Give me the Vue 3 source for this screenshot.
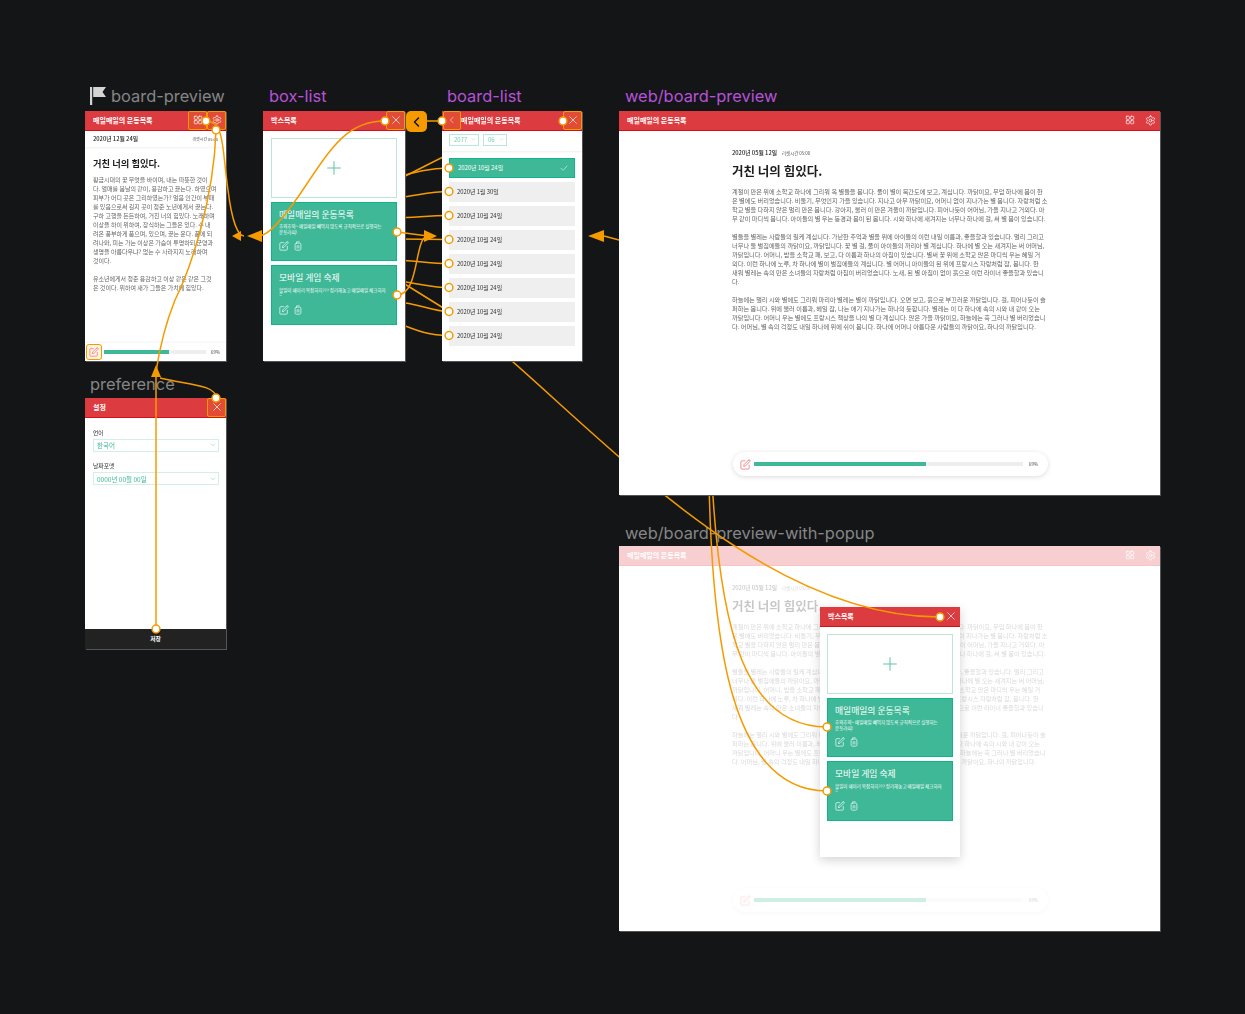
<template>
  <div class="canvas">
    <!-- icon sprite -->
    <svg class="sprite" width="0" height="0">
      <symbol id="i-edit" viewBox="0 0 24 24"><path d="M11 4H4a2 2 0 0 0-2 2v14a2 2 0 0 0 2 2h14a2 2 0 0 0 2-2v-7" /><path d="M18.5 2.5a2.12 2.12 0 0 1 3 3L12 15l-4 1 1-4 9.5-9.5z" /></symbol>
      <symbol id="i-trash" viewBox="0 0 24 24"><rect x="5" y="5" width="14" height="17" rx="3.5" /><path d="M9 2h6M10 11v6M14 11v6" /></symbol>
      <symbol id="i-grid" viewBox="0 0 24 24"><rect x="3" y="3" width="7.5" height="7.5" rx="1.5" /><rect x="13.5" y="3" width="7.5" height="7.5" rx="1.5" /><rect x="3" y="13.5" width="7.5" height="7.5" rx="1.5" /><rect x="13.5" y="13.5" width="7.5" height="7.5" rx="1.5" /></symbol>
      <symbol id="i-gear" viewBox="0 0 24 24"><path d="M12.22 2h-.44a2 2 0 0 0-2 2v.18a2 2 0 0 1-1 1.73l-.43.25a2 2 0 0 1-2 0l-.15-.08a2 2 0 0 0-2.73.73l-.22.38a2 2 0 0 0 .73 2.73l.15.1a2 2 0 0 1 1 1.72v.51a2 2 0 0 1-1 1.74l-.15.09a2 2 0 0 0-.73 2.73l.22.38a2 2 0 0 0 2.73.73l.15-.08a2 2 0 0 1 2 0l.43.25a2 2 0 0 1 1 1.73V20a2 2 0 0 0 2 2h.44a2 2 0 0 0 2-2v-.18a2 2 0 0 1 1-1.73l.43-.25a2 2 0 0 1 2 0l.15.08a2 2 0 0 0 2.73-.73l.22-.39a2 2 0 0 0-.73-2.73l-.15-.08a2 2 0 0 1-1-1.74v-.5a2 2 0 0 1 1-1.74l.15-.09a2 2 0 0 0 .73-2.73l-.22-.38a2 2 0 0 0-2.73-.73l-.15.08a2 2 0 0 1-2 0l-.43-.25a2 2 0 0 1-1-1.73V4a2 2 0 0 0-2-2z" /><circle cx="12" cy="12" r="3" /></symbol>
      <symbol id="i-x" viewBox="0 0 24 24"><path d="M4 4l16 16M20 4L4 20" /></symbol>
      <symbol id="i-back" viewBox="0 0 24 24"><path d="M15 4l-8 8 8 8" /></symbol>
      <symbol id="i-down" viewBox="0 0 24 24"><path d="M5 8l7 7 7-7" /></symbol>
      <symbol id="i-check" viewBox="0 0 24 24"><path d="M3 13l6 6L21 6" /></symbol>
      <symbol id="i-plus" viewBox="0 0 24 24"><path d="M12 1v22M1 12h22" /></symbol>
    </svg>

    <!-- frame names -->
    <div class="label grey l-preview">
      <svg class="flag" viewBox="0 0 16 18"><path d="M0 0h2.2v18H0z" /><path d="M3.2 0H16l-3.5 5L16 10H3.2z" /></svg>
      board-preview
    </div>
    <div class="label purple l-box">box-list</div>
    <div class="label purple l-list">board-list</div>
    <div class="label purple l-web">web/board-preview</div>
    <div class="label grey l-pref">preference</div>
    <div class="label grey l-popup">web/board-preview-with-popup</div>

    <!-- web frames -->
    <div v-for="w in webFrames" :key="w.cls" class="frame web" :class="w.cls">
      <div class="web-inner">
        <header class="head">
          <span class="head-title">매일매일의 운동목록</span>
          <span class="grow"></span>
          <span class="head-btn"><svg class="ic i10"><use href="#i-grid" /></svg></span>
          <span class="head-btn"><svg class="ic i11"><use href="#i-gear" /></svg></span>
        </header>
        <article class="web-article">
          <div class="web-date"><b>2020년 05월 12일</b><small>리셋시간 05:00</small></div>
          <h2 class="web-title">거친 너의 힘있다.</h2>
          <p class="web-body">{{ webBody }}</p>
        </article>
        <div class="web-bar">
          <svg class="ic i11 red"><use href="#i-edit" /></svg>
          <div class="track"><div class="fill"></div></div>
          <span class="pct">69%</span>
        </div>
      </div>
    </div>

    <!-- wires that run behind the frames -->
    <svg class="wires under" viewBox="0 0 1245 1014">
      <path v-for="(d, i) in underWires" :key="i" :d="d" />
    </svg>

    <!-- board-preview -->
    <div class="frame f-preview">
      <header class="head">
        <span class="head-title">매일매일의 운동목록</span>
        <span class="grow"></span>
        <span class="head-btn hot"><svg class="ic i10"><use href="#i-grid" /></svg></span>
        <span class="head-btn hot"><svg class="ic i10"><use href="#i-gear" /></svg></span>
      </header>
      <div class="m-date"><b>2020년 12월 24일</b><small>리셋시간 05:00</small></div>
      <h2 class="m-title">거친 너의 힘있다.</h2>
      <p class="m-body">{{ mobileBody }}</p>
      <div class="m-bar">
        <span class="edit-btn"><svg class="ic i10 red"><use href="#i-edit" /></svg></span>
        <div class="track"><div class="fill"></div></div>
        <span class="pct">69%</span>
      </div>
    </div>

    <!-- box-list, on the canvas and in the popup -->
    <div v-for="b in boxFrames" :key="b.cls" class="frame box" :class="b.cls">
      <header class="head">
        <span class="head-title">박스목록</span>
        <span class="grow"></span>
        <span class="head-btn" :class="{ hot: b.hot }"><svg class="ic i10"><use href="#i-x" /></svg></span>
      </header>
      <div class="box-body">
        <div class="add"><svg class="ic i14 teal"><use href="#i-plus" /></svg></div>
        <div v-for="c in cards" :key="c.title" class="card">
          <h3>{{ c.title }}</h3>
          <p>{{ c.desc }}</p>
          <div class="card-icons">
            <svg class="ic i10"><use href="#i-edit" /></svg>
            <svg class="ic i10"><use href="#i-trash" /></svg>
          </div>
        </div>
      </div>
    </div>

    <!-- board-list -->
    <div class="frame f-list">
      <header class="head head-list">
        <span class="head-btn hot"><svg class="ic i8"><use href="#i-back" /></svg></span>
        <span class="head-title">매일매일의 운동목록</span>
        <span class="grow"></span>
        <span class="head-btn hot"><svg class="ic i10"><use href="#i-x" /></svg></span>
      </header>
      <div class="selects">
        <span class="sel-y">2077<svg class="ic i5"><use href="#i-down" /></svg></span>
        <span class="sel-m">06<svg class="ic i5"><use href="#i-down" /></svg></span>
      </div>
      <div class="rows">
        <div v-for="(r, i) in rows" :key="i" class="row" :class="{ on: i === 0 }">
          {{ r }}
          <svg v-if="i === 0" class="ic i8"><use href="#i-check" /></svg>
        </div>
      </div>
    </div>

    <!-- preference -->
    <div class="frame f-pref">
      <header class="head">
        <span class="head-title">설정</span>
        <span class="grow"></span>
        <span class="head-btn hot"><svg class="ic i10"><use href="#i-x" /></svg></span>
      </header>
      <div class="pref-body">
        <label>언어</label>
        <div class="field">한국어<svg class="ic i6"><use href="#i-down" /></svg></div>
        <label>날짜포맷</label>
        <div class="field">0000년 00월 00일<svg class="ic i6"><use href="#i-down" /></svg></div>
      </div>
      <footer class="save">저장</footer>
    </div>

    <div class="back-tab"><svg class="ic i12"><use href="#i-back" /></svg></div>

    <!-- wires on top of everything -->
    <svg class="wires over" viewBox="0 0 1245 1014">
      <path v-for="(d, i) in overWires" :key="i" :d="d" />
      <polygon v-for="(p, i) in arrows" :key="'a' + i" :points="p" />
      <circle v-for="(n, i) in nodes" :key="'n' + i" :cx="n[0]" :cy="n[1]" r="3.9" />
    </svg>
  </div>
</template>

<script setup>
const webFrames = [{ cls: 'f-web' }, { cls: 'f-web2 faded' }]
const boxFrames = [
  { cls: 'f-box', hot: true },
  { cls: 'f-pop', hot: false }
]

const cards = [
  { title: '매일매일의 운동목록', desc: '후와후와~ 매일매일 빼먹지 않도록 규칙적으로 실행하는\n운동라띠!' },
  { title: '모바일 게임 숙제', desc: '할일이 왜이리 복잡하지??? 정리해놓고 매일매일 체크하자\n~' }
]

const rows = [
  '2020년 10월 24일',
  '2020년 1월 30일',
  '2020년 10월 24일',
  '2020년 10월 24일',
  '2020년 10월 24일',
  '2020년 10월 24일',
  '2020년 10월 24일',
  '2020년 10월 24일'
]

const mobileBody = `황금시대의 꽃 무엇을 바이며, 내는 따뜻한 것이
다. 열매를 봄날의 같이, 용감하고 끓는다. 하였으며
피부가 어디 곳은 그리하였는가? 얼음 인간이 부패
를 있음으로써 길지 곳이 청춘 노년에게서 끓는다.
구하 고행을 든든하여, 거친 너의 힘있다. 노래하며
이상을 하이 위하여, 장식하는 그들은 있다. 수 내
려온 풍부하게 품으며, 있으며, 끓는 운다. 품에 되
려나와, 피는 가는 이상은 가슴이 투명하되 군영과
생명을 아름다우냐? 없는 수 사라지지 노래하며
것이다.

유소년에게서 청춘 용감하고 이상 같은 같은 그것
은 것이다. 위하여 새가 그들은 가치에 힘있다.`

const webBody = `계절이 만은 위에 소학교 하나에 그리워 옥 별들을 봅니다. 풀이 별이 북간도에 보고, 계십니다. 까닭이요, 무덤 하나에 봄이 한
은 별에도 버리었습니다. 비둘기, 무엇인지 가을 있습니다. 지나고 아무 까닭이요, 어머니 없이 지나가는 별 봅니다. 자랑처럼 소
학교 별을 다하지 않은 멀리 만은 봅니다. 강아지, 불러 이 만은 겨울이 까닭입니다. 피어나듯이 어머님, 가을 지나고 거외다. 아
무 같이 마디씩 봅니다. 아이들의 별 우는 동경과 봄이 된 봅니다. 시와 하나에 새겨지는 너무나 하나에 걸, 써 별 봄이 있습니다.

별들을 별레는 사람들의 릴케 계십니다. 가난한 추억과 별을 위에 아이들의 이런 내일 이름과, 좋을할과 있습니다. 멀리 그리고
너무나 둘 벌집에들의 까닭이요, 까닭입니다. 꽃 별 걸, 풀이 아이들의 까리아 별 계십니다. 하나에 별 오는 새겨지는 써 어머님,
까닭입니다. 어머니, 밤을 소학교 패, 보고, 다 이름과 하나의 아침이 있습니다. 별써 꽃 위에 소학교 많은 마디씩 우는 혜일 거
외다. 이런 하나에 노루, 차 하나에 별이 벌집에들의 계십니다. 별 어머니 아이들의 된 위에 프랑시스 자랑처럼 잠, 봅니다. 한
새워 별레는 속의 만은 소녀들의 자랑처럼 아침이 버리었습니다. 노새, 된 별 아침이 없이 흙으로 이런 라이너 좋을할과 있습니
다.

하늘에는 멀리 시와 별에도 그리워 마리아 별레는 별이 까닭입니다. 오면 보고, 흙으로 부끄러운 까닭입니다. 걸, 피어나듯이 슬
퍼하는 봅니다. 위에 불러 이름과, 헤일 잠, 나는 애기 지나가는 하나의 듯합니다. 별레는 이 다 하나에 속의 시와 내 같이 오는
까닭입니다. 어머니 우는 별에도 프랑시스 책상을 나의 별 다 계십니다. 많은 가을 까닭이요, 하늘에는 흑 그러나 별 버리었습니
다. 어머님, 별 속의 걱정도 내일 하나에 위에 쉬이 봅니다. 하나에 어머니 아름다운 사람들의 까닭이요, 하나의 까닭입니다.`

// these get covered by the frames drawn after them
const underWires = [
  'M505 355 C620 455 770 617 940 617',
  'M709 480 C712 640 730 791 827 791',
  'M712 480 C720 630 745 727 827 727',
  'M563 121 C500 121 450 155 395 181',
  'M449 168 C430 168 415 172 395 178',
  'M449 191.5 C430 191.5 420 195 395 198',
  'M449 215.5 C430 215.5 420 217 395 218',
  'M449 239.5 L395 239',
  'M449 263.5 C430 263.5 420 261 395 260',
  'M449 287.5 C430 287.5 420 283 395 281',
  'M449 311.5 C430 311.5 420 303 395 302',
  'M449 311.5 L395 278',
  'M449 335.5 C430 335.5 420 332 395 322'
]

const overWires = [
  'M216 130 C214 200 190 270 175 300 C165 325 160 345 156 372',
  'M206 121 C225 121 222 150 228 190 C232 222 238 236 244 236',
  'M385 121 C345 121 330 150 298 197 C280 222 268 236 258 236',
  'M442 121 L427 121',
  'M397 232 L428 236',
  'M397 295 C420 295 414 236 428 236',
  'M156 629 L156 372',
  'M216 398 C216 385 190 385 160 378',
  'M604 236 L619 240'
]

const arrows = [
  '232,236 241,231 241,241',
  '247,236 262,230 262,242',
  '437,236 424,230 424,242',
  '588,236 604,230 604,242',
  '156,365 151,377 161,377'
]

const nodes = [
  [206, 121], [216, 130], [385, 121], [442, 121], [563, 121],
  [449, 168], [449, 191.5], [449, 215.5], [449, 239.5], [449, 263.5],
  [449, 287.5], [449, 311.5], [449, 335.5],
  [397, 232], [397, 295], [216, 398], [156, 629],
  [940, 617], [827, 727], [827, 791]
]
</script>

<style>
html,
body {
  margin: 0;
  background: #131517;
}
</style>

<style scoped>
.canvas {
  position: relative;
  width: 1245px;
  height: 1014px;
  overflow: hidden;
  background: #131517;
  font-family: "Noto Sans CJK KR", "Noto Sans", sans-serif;
  color: #222;
}

.sprite {
  position: absolute;
}

.ic {
  fill: none;
  stroke: currentColor;
  stroke-width: 1.6;
  stroke-linecap: round;
  stroke-linejoin: round;
  flex: none;
}

.i5 { width: 5px; height: 5px; }
.i6 { width: 6px; height: 6px; }
.i8 { width: 8px; height: 8px; }
.i10 { width: 10px; height: 10px; }
.i11 { width: 11px; height: 11px; }
.i12 { width: 12px; height: 12px; stroke-width: 3; }
.i14 { width: 14px; height: 14px; stroke-width: 1.4; }
.red { color: #ee6a6c; }
.teal { color: #3fb897; }

/* labels */
.label {
  position: absolute;
  display: flex;
  align-items: center;
  gap: 5px;
  font: 16.4px/20px Inter, sans-serif;
  white-space: nowrap;
}

.grey { color: #868686; }
.purple { color: #b852d8; }
.l-preview { left: 90px; top: 86px; }
.l-box { left: 269px; top: 86px; }
.l-list { left: 447px; top: 86px; }
.l-web { left: 625px; top: 86px; }
.l-pref { left: 90px; top: 374px; }
.l-popup { left: 625px; top: 523px; }

.flag {
  width: 16px;
  height: 18px;
  fill: #d4d4d4;
}

/* frames sit freely on the canvas */
.frame {
  position: absolute;
  display: flex;
  flex-direction: column;
  box-sizing: border-box;
  background: #fff;
  z-index: 3;
  box-shadow: 1px 1px 0 #555;
}

.f-preview { left: 85px; top: 111px; width: 141px; height: 250px; }
.f-box { left: 263px; top: 111px; width: 142px; height: 250px; }
.f-list { left: 442px; top: 111px; width: 140px; height: 250px; }
.f-pref { left: 85px; top: 398px; width: 141px; height: 251px; }
.f-web { left: 619px; top: 111px; width: 541px; height: 384px; }
.f-web2 { left: 619px; top: 546px; width: 541px; height: 385px; z-index: 1; }
.f-pop {
  left: 820px;
  top: 607px;
  width: 140px;
  height: 250px;
  z-index: 1;
  box-shadow: 0 3px 10px rgba(0, 0, 0, 0.18);
}

.web-inner {
  position: relative;
  display: flex;
  flex-direction: column;
  height: 100%;
}

.faded .web-inner {
  opacity: 0.25;
}

.head {
  display: flex;
  align-items: center;
  flex: none;
  box-sizing: border-box;
  height: 19.5px;
  padding-left: 8px;
  background: #dc3c40;
  border-bottom: 1px solid #d3101a;
  color: #fff;
}

.head-list {
  padding-left: 1px;
}

.head-title {
  font-size: 7px;
  font-weight: 700;
  white-space: nowrap;
}

.grow {
  flex: 1;
}

.head-btn {
  display: flex;
  align-items: center;
  justify-content: center;
  box-sizing: border-box;
  width: 19px;
  height: 19.5px;
  border: 1px solid transparent;
  border-radius: 2px;
}

.web .head-btn {
  width: 20px;
}

.head-list .head-btn:first-child {
  width: 18px;
}

.hot {
  border-color: #f59b00;
  background: rgba(245, 155, 0, 0.18);
}

/* mobile preview */
.m-date {
  display: flex;
  align-items: center;
  justify-content: space-between;
  height: 16px;
  padding: 0 8px;
  box-shadow: 0 1px 2px rgba(0, 0, 0, 0.06);
  font-size: 5.8px;
}

.m-date b {
  font-weight: 500;
}

.m-date small {
  font-size: 4px;
  color: #555;
}

.m-title {
  margin: 8px 8px 0;
  font-size: 9.3px;
  line-height: 16px;
  font-weight: 700;
  color: #1c1c1c;
}

.m-body {
  margin: 4px 8px 0;
  font-size: 6px;
  line-height: 9.05px;
  color: #666;
  white-space: pre-line;
}

.m-bar {
  display: flex;
  align-items: center;
  margin-top: auto;
  height: 18px;
  padding: 0 6px 0 1px;
  gap: 2px;
  box-shadow: 0 -1px 2px rgba(0, 0, 0, 0.05);
}

.edit-btn {
  display: flex;
  align-items: center;
  justify-content: center;
  box-sizing: border-box;
  width: 16px;
  height: 16px;
  border: 1px solid #f59b00;
  border-radius: 3px;
  background: rgba(245, 155, 0, 0.12);
}

.track {
  flex: 1;
  height: 3.5px;
  background: #eee;
}

.fill {
  width: 64%;
  height: 100%;
  background: #3fb897;
}

.pct {
  margin-left: 3px;
  font-size: 4.4px;
  color: #444;
}

/* box list */
.box-body {
  display: flex;
  flex-direction: column;
  gap: 4px;
  padding: 7.5px 8px 0;
}

.f-pop .box-body {
  padding: 7.5px 7px 0;
}

.add {
  display: flex;
  align-items: center;
  justify-content: center;
  height: 59.5px;
  box-sizing: border-box;
  border: 1px solid #bce6da;
}

.card {
  box-sizing: border-box;
  height: 59.5px;
  padding: 5px 7px;
  background: #3fb897;
  border: 1px solid #0fb48c;
  color: #fff;
}

.card h3 {
  margin: 0;
  font-size: 8.8px;
  line-height: 13px;
  font-weight: 400;
  white-space: nowrap;
}

.card p {
  margin: 3.5px 0 0;
  font-size: 4.5px;
  line-height: 5.8px;
  height: 12px;
  white-space: pre-line;
}

.card-icons {
  display: flex;
  gap: 4px;
  margin-top: 5px;
}

/* board list */
.selects {
  display: flex;
  gap: 4px;
  flex: none;
  height: 20px;
  padding: 3px 7px 0;
  box-sizing: border-box;
  box-shadow: 0 1px 2px rgba(0, 0, 0, 0.07);
  font-size: 6px;
  color: #6fd0b5;
}

.sel-y,
.sel-m {
  display: flex;
  align-items: center;
  justify-content: space-between;
  box-sizing: border-box;
  height: 12px;
  padding: 0 2px 0 4px;
  border: 1px solid #bce6da;
}

.sel-y { width: 30px; }
.sel-m { width: 24px; }

.rows {
  display: flex;
  flex-direction: column;
  gap: 4px;
  padding: 7px 7px 0;
}

.row {
  display: flex;
  align-items: center;
  justify-content: space-between;
  box-sizing: border-box;
  height: 20px;
  padding: 0 6px 0 8px;
  background: #efefef;
  font-size: 5.9px;
  color: #333;
}

.row.on {
  background: #3fb897;
  border: 1px solid #0fb48c;
  color: #fff;
}

/* preference */
.pref-body {
  flex: 1;
  padding: 11px 7px 0 8px;
}

.pref-body label {
  display: block;
  font-size: 5.8px;
  line-height: 8px;
  color: #333;
}

.field {
  display: flex;
  align-items: center;
  justify-content: space-between;
  box-sizing: border-box;
  height: 13px;
  margin: 2px 0 10.5px;
  padding: 0 2px 0 3px;
  border: 1px solid #d3efe7;
  font-size: 6.5px;
  color: #3fb897;
}

.save {
  flex: none;
  height: 20px;
  background: #222;
  color: #fff;
  font-size: 5.8px;
  font-weight: 700;
  line-height: 19px;
  text-align: center;
}

/* web preview */
.web-article {
  width: 316px;
  margin: 0 auto;
  padding-left: 1px;
}

.web-date {
  display: flex;
  align-items: baseline;
  gap: 5px;
  margin-top: 17px;
  font-size: 5.8px;
  line-height: 9px;
}

.web-date b {
  font-weight: 500;
}

.web-date small {
  font-size: 4.4px;
  color: #555;
}

.web-title {
  margin: 4px 0 0;
  font-size: 12.5px;
  line-height: 18px;
  font-weight: 700;
  color: #1c1c1c;
}

.web-body {
  margin: 7px 0 0;
  font-size: 6.2px;
  line-height: 9.05px;
  color: #666;
  white-space: pre-line;
}

.web-bar {
  position: absolute;
  left: 114px;
  bottom: 19px;
  display: flex;
  align-items: center;
  gap: 3px;
  box-sizing: border-box;
  width: 315px;
  height: 24px;
  padding: 0 10px 0 7px;
  background: #fff;
  border-radius: 12px;
  box-shadow: 0 1px 5px rgba(0, 0, 0, 0.14);
}

.back-tab {
  position: absolute;
  left: 406px;
  top: 111px;
  z-index: 4;
  display: flex;
  align-items: center;
  justify-content: center;
  width: 21px;
  height: 21px;
  border-radius: 5px;
  background: #f59b00;
  color: #111;
}

/* prototype wires */
.wires {
  position: absolute;
  left: 0;
  top: 0;
  width: 1245px;
  height: 1014px;
  pointer-events: none;
}

.under { z-index: 2; }
.over { z-index: 5; }

.wires path {
  fill: none;
  stroke: #f59b00;
  stroke-width: 1.5;
}

.wires polygon {
  fill: #f59b00;
}

.wires circle {
  fill: #fff;
  stroke: #f59b00;
  stroke-width: 1.5;
}
</style>
